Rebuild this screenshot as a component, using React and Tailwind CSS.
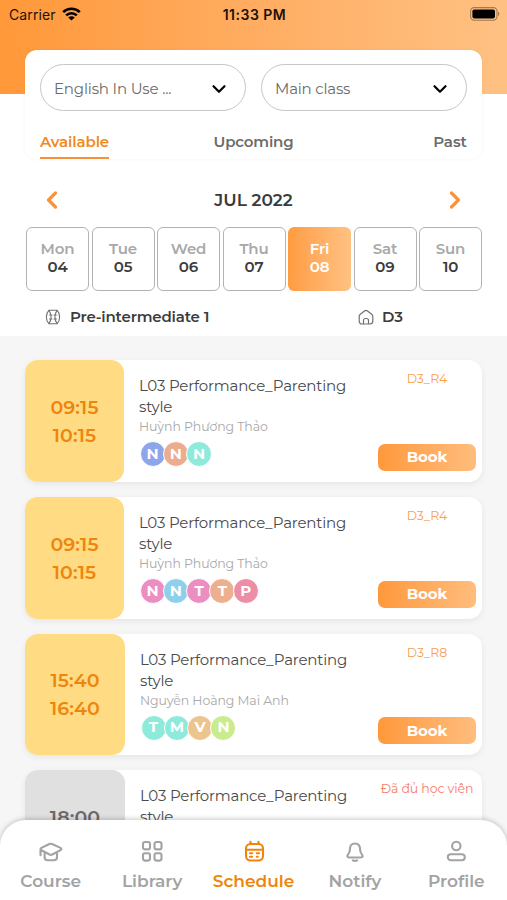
import { ChevronDown, ChevronLeft, ChevronRight } from 'lucide-react';

const days = [
  { name: 'Mon', date: '04' },
  { name: 'Tue', date: '05' },
  { name: 'Wed', date: '06' },
  { name: 'Thu', date: '07' },
  { name: 'Fri', date: '08', active: true },
  { name: 'Sat', date: '09' },
  { name: 'Sun', date: '10' },
];

const lessons = [
  {
    id: 1,
    start: '09:15',
    end: '10:15',
    teacher: 'Huỳnh Phương Thảo',
    room: 'D3_R4',
    students: [
      { letter: 'N', color: 'bg-[#8fa5ea]' },
      { letter: 'N', color: 'bg-[#ecad8e]' },
      { letter: 'N', color: 'bg-[#8eeadb]' },
    ],
  },
  {
    id: 2,
    start: '09:15',
    end: '10:15',
    teacher: 'Huỳnh Phương Thảo',
    room: 'D3_R4',
    students: [
      { letter: 'N', color: 'bg-[#ec8ec2]' },
      { letter: 'N', color: 'bg-[#8ed0ec]' },
      { letter: 'T', color: 'bg-[#ec8ec2]' },
      { letter: 'T', color: 'bg-[#ecb08e]' },
      { letter: 'P', color: 'bg-[#ec8ea6]' },
    ],
  },
  {
    id: 3,
    start: '15:40',
    end: '16:40',
    teacher: 'Nguyễn Hoàng Mai Anh',
    room: 'D3_R8',
    wide: true,
    students: [
      { letter: 'T', color: 'bg-[#8eeadb]' },
      { letter: 'M', color: 'bg-[#8eeadb]' },
      { letter: 'V', color: 'bg-[#ecc48e]' },
      { letter: 'N', color: 'bg-[#c9ec8e]' },
    ],
  },
  {
    id: 4,
    start: '18:00',
    end: '19:00',
    teacher: '',
    wide: true,
    full: true,
    students: [],
  },
];

export default function App() {
  return (
    <div className="relative h-[900px] w-[507px] overflow-hidden bg-[#f6f6f6] font-['Montserrat','Inter',sans-serif] text-[#4a4a4a]">
      {/* ===== HEADER ===== */}
      <div className="h-[94px] bg-gradient-to-r from-[#ff9838] to-[#ffc183]">
        <StatusBar />
      </div>

      <div className="relative -mt-[44px] px-[25px]">
        <div className="h-[109px] rounded-[12px] bg-white px-[15px] pt-[14px] shadow-[0_0_4px_rgba(0,0,0,0.04)]">
          <div className="flex gap-[15px]">
            <Select label="English In Use ..." tracking="tracking-[-0.17px]" />
            <Select label="Main class" tracking="tracking-[-0.2px]" />
          </div>
          <div className="mt-[19px] grid grid-cols-3 text-[15px] leading-[24px] font-semibold text-[#6b6b6b]">
            <span className="h-[29px] justify-self-start border-b-2 border-[#f9933a] tracking-[-0.1px] text-[#f18a1c]">
              Available
            </span>
            <span className="text-center tracking-[-0.15px]">Upcoming</span>
            <span className="text-right">Past</span>
          </div>
        </div>
      </div>

      {/* ===== CALENDAR ===== */}
      <div className="-mt-[65px] h-[242px] bg-white pt-[91px]">
        <div className="flex h-[30px] items-center justify-between px-[38px]">
          <ChevronLeft size={28} strokeWidth={2.8} className="text-[#f9933a]" />
          <span className="pt-px text-[17px] font-semibold text-[#3a3a3a]">JUL 2022</span>
          <ChevronRight size={28} strokeWidth={2.8} className="text-[#f9933a]" />
        </div>
        <div className="mt-[12px] grid grid-cols-7 gap-[2.5px] pr-[25px] pl-[26px]">
          {days.map(day => (
            <DayCell key={day.name} day={day} />
          ))}
        </div>
        <div className="mt-[14px] flex h-[24px] items-center text-[15px] font-semibold text-[#3c3c3c]">
          <BallIcon />
          <span className="ml-[9px] w-[288px] tracking-[-0.18px]">Pre-intermediate 1</span>
          <HomeIcon />
          <span className="ml-[8px]">D3</span>
        </div>
      </div>

      {/* ===== LESSONS ===== */}
      <div className="mt-[24px] space-y-[15px] px-[25px]">
        {lessons.map(lesson => (
          <LessonCard key={lesson.id} lesson={lesson} />
        ))}
      </div>

      <TabBar />
    </div>
  );
}

function StatusBar() {
  return (
    <div className="grid h-[28px] grid-cols-3 items-center pr-[7px] pl-[9px] font-['Inter',sans-serif] text-[14px] text-[#1b1209]">
      <div className="flex items-center gap-[6px]">
        <span className="tracking-[0.1px]">Carrier</span>
        <svg width="19" height="14" viewBox="0 0 19 14" fill="none" stroke="#000" strokeWidth="2.6">
          <path d="M1.2 5.1a12 12 0 0 1 16.6 0" />
          <path d="M4.2 8.4a7.6 7.6 0 0 1 10.6 0" />
          <path d="M9.5 13.6 6.3 10.5a4.6 4.6 0 0 1 6.4 0Z" fill="#000" stroke="none" />
        </svg>
      </div>
      <span className="text-center font-semibold tracking-[0.5px]">11:33 PM</span>
      <svg className="justify-self-end" width="30" height="14" viewBox="0 0 30 14">
        <rect x="0.6" y="0.6" width="26.4" height="12.6" rx="3.6" fill="none" stroke="#a07c50" strokeWidth="1.1" />
        <rect x="2.4" y="2.4" width="22.6" height="9" rx="1.8" fill="#000" />
        <path d="M28 4.7v4.4c1.7-.6 1.7-3.8 0-4.4Z" fill="#a07c50" />
      </svg>
    </div>
  );
}

function Select({ label, tracking }) {
  return (
    <button className="flex h-[47px] flex-1 items-center justify-between rounded-full border border-[#c6c6c6] pt-[2px] pr-[15px] pl-[13px] text-[15px] text-[#6b6b6b]">
      <span className={`pt-px ${tracking}`}>{label}</span>
      <ChevronDown size={22} strokeWidth={2.4} className="text-black" />
    </button>
  );
}

function DayCell({ day }) {
  return (
    <div
      className={`flex h-[64px] flex-col items-center justify-center rounded-[6px] pb-[2px] text-[15px] leading-[18.5px] font-semibold tracking-[-0.1px] ${day.active
        ? 'bg-gradient-to-r from-[#ff9c40] to-[#ffc182] text-white'
        : 'border border-[#b3b3b3] bg-white text-[#3c3c3c]'
        }`}
    >
      <span className={day.active ? '' : 'text-[#a8a8a8]'}>{day.name}</span>
      <span>{day.date}</span>
    </div>
  );
}

function LessonCard({ lesson }) {
  return (
    <div className="flex h-[121.8px] rounded-[13px] bg-white shadow-[0_2px_6px_rgba(0,0,0,0.07)]">
      <div
        className={`flex shrink-0 flex-col items-center justify-center rounded-[13px] pt-[2px] text-[19px] leading-[28px] font-semibold tracking-[0.1px] ${lesson.wide ? 'w-[100px]' : 'w-[99px]'} ${lesson.full
          ? 'bg-[#e0e0e0] text-[#6b6b6b]'
          : 'bg-[#ffdc84] text-[#ee850c]'
          }`}
      >
        <span>{lesson.start}</span>
        <span>{lesson.end}</span>
      </div>

      <div className="w-[239px] shrink-0 pt-[15px] pl-[15px]">
        <p className="text-[15px] leading-[21px] tracking-[-0.18px]">
          L03 Performance_Parenting style
        </p>
        <p className="mt-[1px] h-[18px] text-[12.5px] leading-[18px] tracking-[-0.08px] whitespace-nowrap text-[#a8a8a8]">
          {lesson.teacher}
        </p>
        <div className="mt-[5px] flex pl-[0.5px]">
          {lesson.students.map((student, i) => (
            <span
              key={i}
              className={`-mr-[2.7px] flex size-[26px] items-center justify-center rounded-full border border-white text-[15px] font-bold text-white ${student.color}`}
            >
              {student.letter}
            </span>
          ))}
        </div>
      </div>

      <div className="ml-auto flex w-[110px] flex-col items-center justify-between pt-[11px] pb-[11px]">
        {lesson.full ? (
          <span className="text-[12.5px] leading-[16px] tracking-[-0.1px] whitespace-nowrap text-[#f47c6c]">
            Đã đủ học viên
          </span>
        ) : (
          <>
            <span className="text-[12.5px] leading-[16px] tracking-[-0.1px] text-[#f9a04f]">{lesson.room}</span>
            <button className="mr-[6px] h-[27px] w-[98px] self-end rounded-[7px] bg-gradient-to-r from-[#ff983a] to-[#ffbd7c] text-[15px] font-bold tracking-[-0.1px] text-white">
              Book
            </button>
          </>
        )}
      </div>
    </div>
  );
}

function TabBar() {
  return (
    <div className="absolute inset-x-0 bottom-0 flex h-[80px] rounded-t-[26px] bg-white pt-[20px] shadow-[0_-1px_5px_rgba(0,0,0,0.22)]">
      <Tab label="Course">
        <path d="M1.5 9.2c0-.6.3-1 .9-1.300L10.400 4c.9-.4 1.700-.4 2.600 0l8.500 3.900c1.100.6 1.100 1.700 0 2.300l-8.200 4.300c-1 .5-1.800.5-2.800 0L2.400 10.300c-.6-.3-.9-.7-.9-1.100ZM1.500 9.500v5.800M5.600 12v5.300c0 2 1.200 3 3.200 3h6c2 0 3.200-1 3.200-3V12" />
      </Tab>
      <Tab label="Library">
        <rect x="3" y="2" width="7" height="7.4" rx="2" />
        <rect x="14.5" y="2" width="7" height="7.4" rx="2" />
        <rect x="3" y="13.2" width="7" height="7.4" rx="2" />
        <rect x="14.5" y="13.2" width="7" height="7.4" rx="2" />
      </Tab>
      <Tab label="Schedule" active>
        <rect x="4" y="4" width="17" height="16.5" rx="4.5" />
        <path d="M4 9.800h17M8.500 1.800V4M16.500 1.800V4" />
        <path d="M8 13.300h2.200M14.800 13.300h2.200M8 16.800h2.200M14.800 16.800h1" />
      </Tab>
      <Tab label="Notify">
        <path d="M12 3.500c-3.400 0-5 2.200-5 5.200 0 3.200-.5 4-2 5.900-1.300 1.700-.8 2.900 1.200 2.900h11.600c2 0 2.500-1.200 1.200-2.900-1.500-1.900-2-2.700-2-5.900 0-3-1.600-5.200-5-5.200Z" />
        <path d="M9.800 20.300c1.300.7 3.100.7 4.400 0" />
      </Tab>
      <Tab label="Profile">
        <circle cx="12.3" cy="6" r="4.2" />
        <rect x="3.8" y="14.2" width="17" height="6" rx="3" />
      </Tab>
    </div>
  );
}

function Tab({ label, active, children }) {
  return (
    <div className={`flex flex-1 flex-col items-center font-semibold ${active ? 'text-[#ee850c]' : 'text-[#a3a3a3]'}`}>
      <svg width="24" height="24" viewBox="0 0 24 24" fill="none" stroke="currentColor" strokeWidth="2.1" strokeLinecap="round" strokeLinejoin="round">
        {children}
      </svg>
      <span className="mt-[5px] text-[17px] leading-[24px]">{label}</span>
    </div>
  );
}

function BallIcon() {
  return (
    <svg className="ml-[45px]" width="16" height="16" viewBox="0 0 16 16" fill="none" stroke="#707070" strokeWidth="1.1" strokeLinecap="round">
      <path d="M4 1.2h8c3.500 3.500 3.500 10 0 13.600H4C.5 11.200.5 4.700 4 1.200Z" />
      <path d="M4 1.700c2.800 3.500 2.800 9.100 0 12.600M12 1.700c-2.800 3.500-2.800 9.100 0 12.600M4.600 6h2.400M4.600 10h2.400M9 6h2.400M9 10h2.400" />
    </svg>
  );
}

function HomeIcon() {
  return (
    <svg width="16" height="16" viewBox="0 0 16 16" fill="none" stroke="#707070" strokeWidth="1.2" strokeLinejoin="round">
      <path d="M1.200 7.400c0-.9.400-1.500 1.100-2.100L6.500 2c1-.8 2-.8 3 0l4.200 3.300c.7.600 1.100 1.200 1.100 2.100V12c0 2-1 3-3 3H4.200c-2 0-3-1-3-3Z" />
      <path d="M5.500 15v-3.500c0-1.300.7-2 2-2h1c1.300 0 2 .7 2 2V15" />
    </svg>
  );
}
